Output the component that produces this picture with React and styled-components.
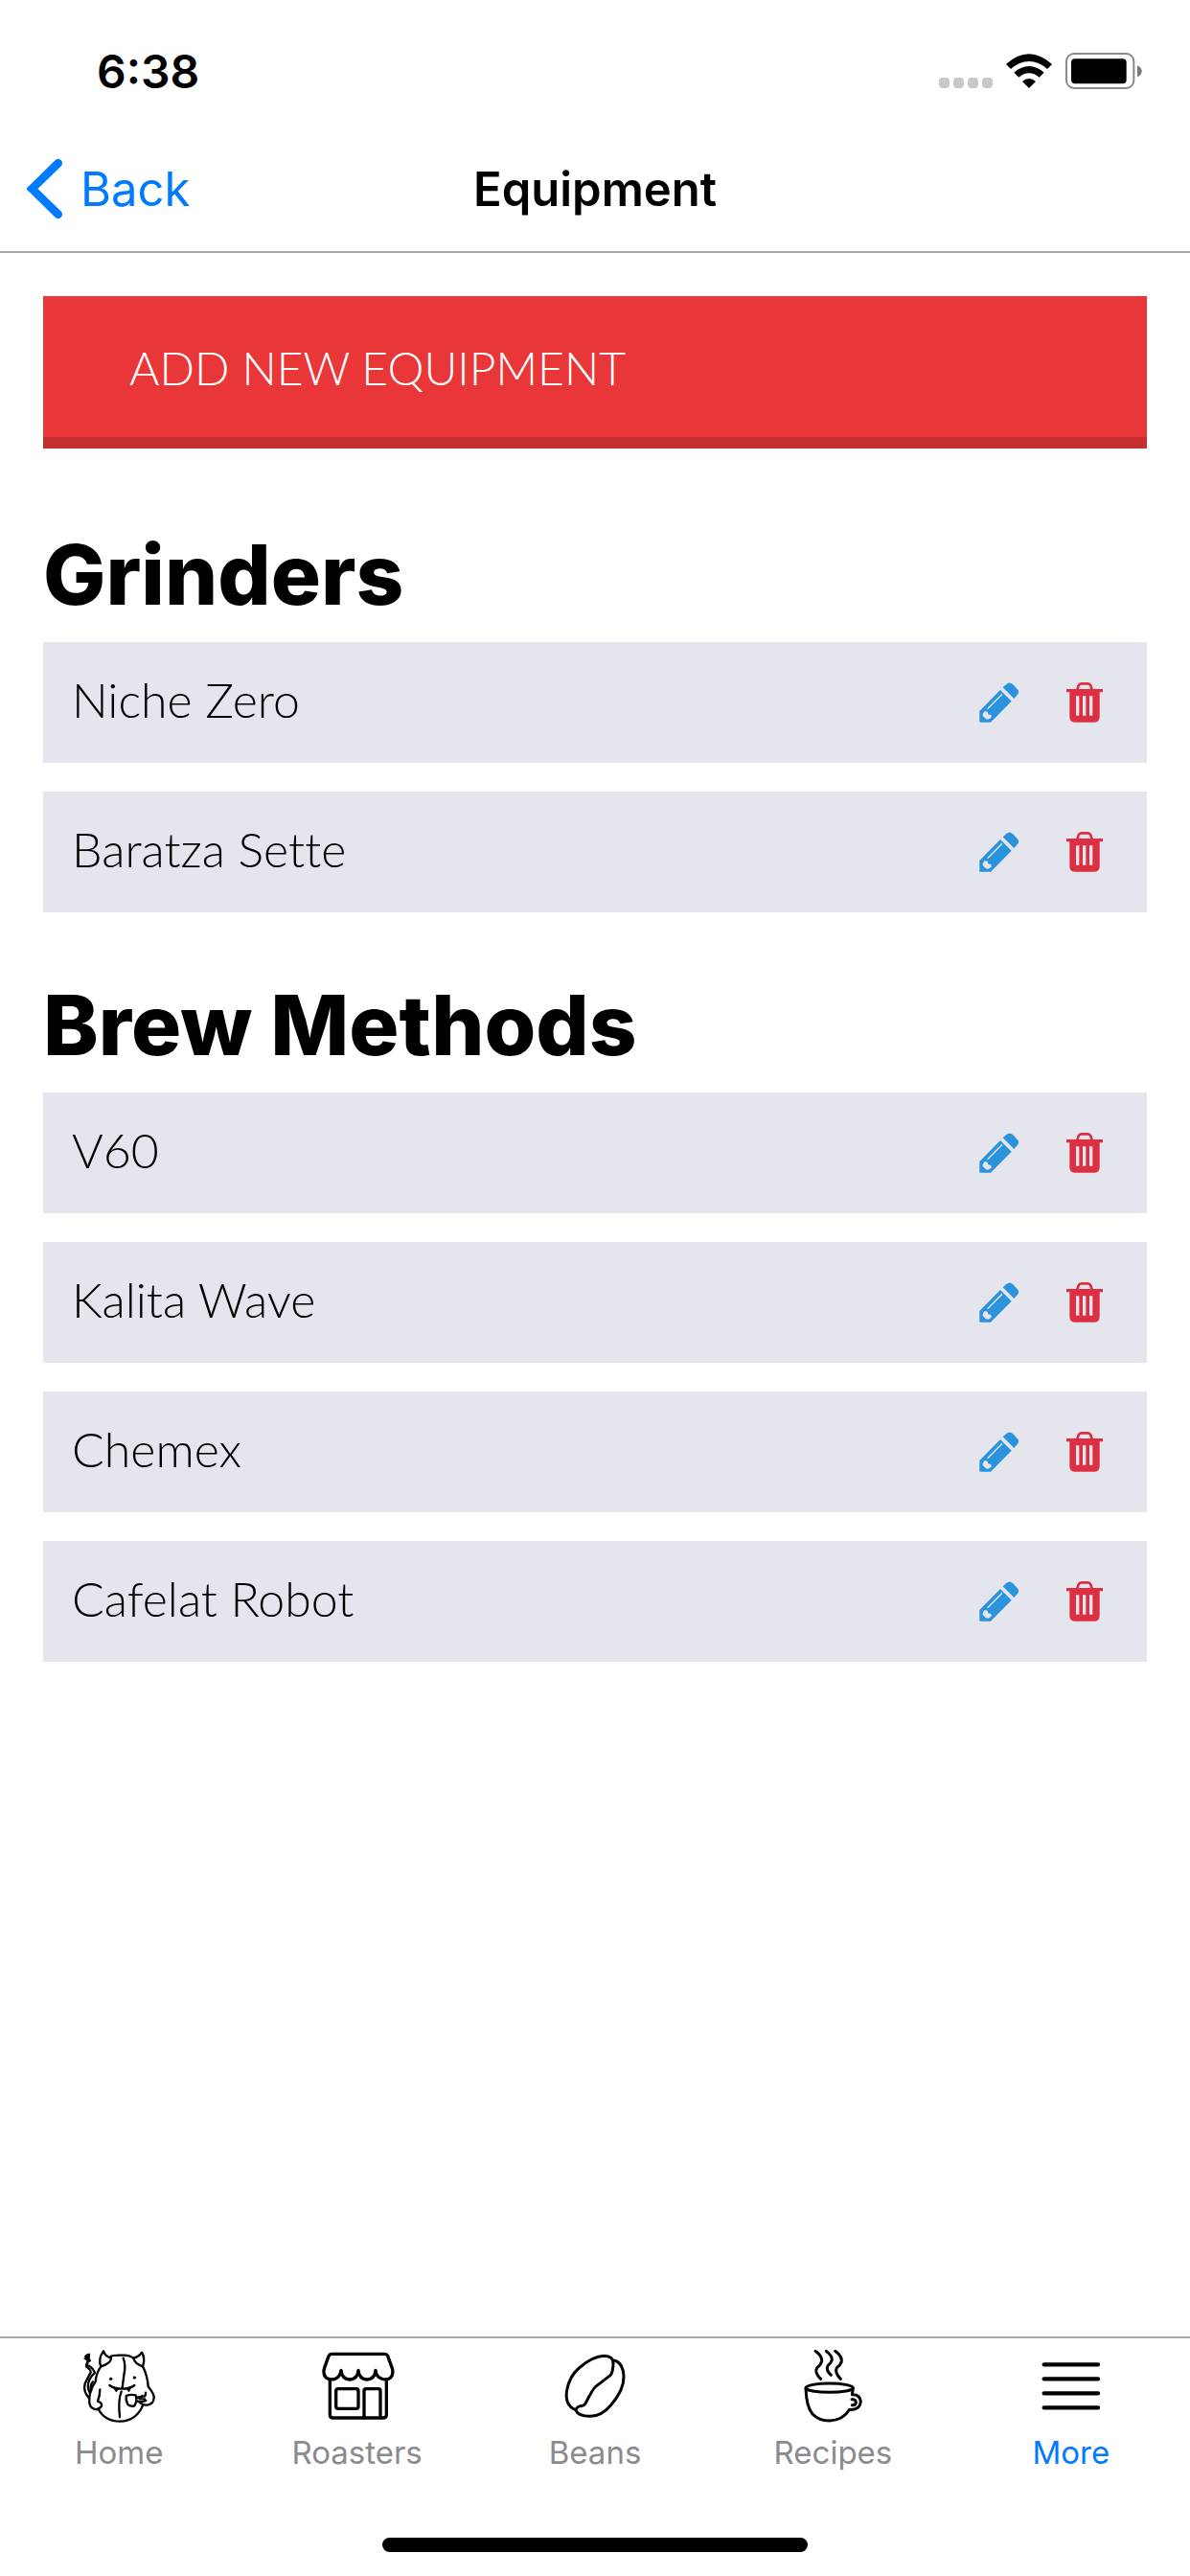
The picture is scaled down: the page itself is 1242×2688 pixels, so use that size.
import { useState } from 'react'
import styled, { createGlobalStyle } from 'styled-components'

const sections = [
  { title: 'Grinders', items: ['Niche Zero', 'Baratza Sette'] },
  { title: 'Brew Methods', items: ['V60', 'Kalita Wave', 'Chemex', 'Cafelat Robot'] },
]

const WifiIcon = () => (
  <svg width='48' height='36' viewBox='388 106 144 108'>
    <path d='M388 139 Q424 107 460 107 Q496 107 532 139 L517 154 Q490 130 460 130 Q430 130 403 154 Z' />
    <path d='M413 165 Q436 145 460 145 Q484 145 507 165 L492 180 Q476 167 460 167 Q444 167 428 180 Z' />
    <path d='M439 193 Q449 184 460 184 Q471 184 481 193 L460 214 Z' />
  </svg>
)

const BatteryIcon = () => (
  <svg width='80' height='38' viewBox='574 104 240 114'>
    <rect x='577' y='107' width='211' height='108' rx='24' fill='#fff' stroke='#8a8a8a' strokeWidth='6' />
    <rect x='592' y='123' width='173' height='78' rx='12' />
    <path d='M799 144 Q813 150 813 162 Q813 174 799 180 Z' fill='#777' />
  </svg>
)

const BackIcon = () => (
  <svg width='38' height='64' viewBox='83 496 114 192' fill='none' stroke='#007aff' strokeWidth='26' strokeLinecap='round'>
    <path d='M181 512 L99 592 L181 672' />
  </svg>
)

const PencilIcon = () => (
  <svg width='42' height='42' viewBox='127 160 126 126'>
    <path d='M128 285 V250 L193 184 L228 219 L163 285 Z' fill='#2b93dc' />
    <path d='M201 176 L212 166 Q222 157 232 166 L246 181 Q255 190 246 200 L236 211 Z' fill='#2b93dc' />
    <path d='M153 243 L199 197' fill='none' stroke='#e5e5ee' strokeWidth='4' />
    <path d='M138 259 L144 250 L153 252 L155 260 L164 262 L165 270 L155 276 L148 275 L138 265 Z' fill='#e5e5ee' />
  </svg>
)

const TrashIcon = () => (
  <svg width='38' height='42' viewBox='399 160 114 126'>
    <path d='M432 186 L437 170 Q440 164 446 164 H466 Q472 164 475 170 L480 186' fill='none' stroke='#dc2f42' strokeWidth='8' />
    <path d='M399 181 H513 V191 H503 V268 Q503 285 487 285 H425 Q409 285 409 268 V191 H399 Z' fill='#dc2f42' />
    <path d='M434 203 V264 M455 203 V264 M476 203 V264' fill='none' stroke='#e5e5ee' strokeWidth='10' />
  </svg>
)

const HomeIcon = () => (
  <TabSvg viewBox='73 90 240 240' strokeWidth='7'>
    <path d='M166 118 Q174 112 202 113 Q225 111 239 122' />
    <path d='M137 148 Q122 168 120 196 Q104 218 101 245 Q98 277 115 281 Q128 286 139 272 Q142 263 127 257 Q134 240 134 220' />
    <path d='M129 282 Q150 320 197 320 Q249 318 269 268' />
    <path d='M268 148 Q283 178 285 211 Q304 235 303 246 Q302 266 282 269 Q266 270 256 258' />
    <path d='M137 148 Q127 124 145 100 Q149 116 169 122 Q168 139 137 148 Z' />
    <path d='M268 148 Q277 124 265 104 Q258 117 239 122 Q243 139 268 148 Z' />
    <path d='M207 122 Q216 145 209 175 Q206 198 204 215 M201 227 Q190 253 196 306' />
    <path d='M164 207 Q178 218 203 218 Q228 218 242 207' />
    <path d='M177 216 L185 228 L192 218 Z M217 218 L225 228 L231 214 Z' fill='#000' strokeWidth='2' />
    <circle cx='168' cy='187' r='4' fill='#000' strokeWidth='2' />
    <circle cx='242' cy='183' r='4' fill='#000' strokeWidth='2' />
    <path d='M216 240 Q230 234 246 238 Q252 255 242 271 Q231 275 221 267 Q214 253 216 240 Z' />
    <path d='M248 246 L267 242 M250 257 Q263 262 278 255 M266 240 Q277 247 277 230 M258 250 H274' />
    <path d='M100 247 Q80 226 87 202 Q98 179 105 167 Q107 160 91 148' />
    <path d='M103 232 Q91 210 101 190 Q109 174 118 168 Q112 153 100 146' />
    <path d='M86 116 Q94 107 102 108 L101 122 L105 131 L97 135 L96 148 L89 144 L94 130 L84 123 L94 121 Z' fill='#000' strokeWidth='3' />
    <path d='M107 221 Q101 209 112 196' />
  </TabSvg>
)

const RoastersIcon = () => (
  <TabSvg viewBox='158 90 240 240' strokeWidth='10'>
    <path d='M198 109 H363 Q370 109 373 115 L386 151 Q393 172 382 183 Q371 193 353 186 Q337 180 335 160 Q333 187 308 189 Q283 187 281 160 Q279 187 254 189 Q229 187 227 160 Q224 182 208 187 Q190 192 179 182 Q169 171 175 152 L188 116 Q191 109 198 109 Z' />
    <path d='M192 188 V299 Q192 309 202 309 H359 Q369 309 369 299 V188' />
    <rect x='211' y='218' width='70' height='62' rx='7' />
    <path d='M299 309 V224 Q299 218 305 218 H344 Q350 218 350 224 V309' />
  </TabSvg>
)

const BeansIcon = () => (
  <TabSvg viewBox='123 90 240 240' strokeWidth='9'>
    <path d='M182 284 Q147 269 155 222 Q163 179 193 153 Q236 116 271 115 Q300 116 300 137 Q300 165 291 176 L245 211 Q236 218 213 264 Q208 272 196 272 Q188 274 182 284 Q191 304 225 304 Q261 306 292 270 Q334 222 333 180 Q331 133 299 128' />
  </TabSvg>
)

const RecipesIcon = () => (
  <TabSvg viewBox='148 90 240 240' strokeWidth='9'>
    <path d='M214 100 Q235 115 234 131 Q232 142 219 152 Q210 167 231 187' />
    <path d='M248 100 Q267 115 266 127 Q264 136 253 146 Q246 160 263 175' />
    <path d='M276 100 Q297 115 296 131 Q294 142 281 152 Q273 167 293 187' />
    <ellipse cx='258' cy='215' rx='74' ry='14' />
    <path d='M184 217 Q186 274 205 297 Q225 318 259 318 Q300 317 321 283 Q354 285 356 258 Q354 235 329 236 L332 217' />
    <path d='M328 251 Q341 250 341 261 Q340 270 329 269' />
  </TabSvg>
)

const MoreIcon = () => (
  <TabSvg viewBox='113 90 240 240' strokeWidth='13'>
    <path d='M148 142 H317 M148 187 H317 M148 232 H317 M148 277 H317' />
  </TabSvg>
)

const tabs = [
  { label: 'Home', Icon: HomeIcon },
  { label: 'Roasters', Icon: RoastersIcon },
  { label: 'Beans', Icon: BeansIcon },
  { label: 'Recipes', Icon: RecipesIcon },
  { label: 'More', Icon: MoreIcon },
]

const App = () => {
  const [equipment, setEquipment] = useState(sections)
  const [active, setActive] = useState('More')
  const handleDelete = (title, item) => {
    setEquipment(equipment.map((section) => (
      section.title === title
        ? { ...section, items: section.items.filter((i) => i !== item) }
        : section
    )))
  }
  return (
    <RootContainer>
      <GlobalStyle />
      <StatusBar>
        <Time>6:38</Time>
        <StatusIcons>
          <Signal><Dot /><Dot /><Dot /><Dot /></Signal>
          <WifiIcon />
          <BatteryIcon />
        </StatusIcons>
      </StatusBar>
      <NavBar>
        <BackLink href='#back'><BackIcon />Back</BackLink>
        <Title>Equipment</Title>
      </NavBar>
      <Content>
        <AddButton type='button'>ADD NEW EQUIPMENT</AddButton>
        {equipment.map(({ title, items }) => (
          <Section key={title}>
            <SectionHeader>{title}</SectionHeader>
            <List>
              {items.map((item) => (
                <Row key={item}>
                  <RowName>{item}</RowName>
                  <IconButton type='button' aria-label={`Edit ${item}`}><PencilIcon /></IconButton>
                  <IconButton type='button' aria-label={`Delete ${item}`} onClick={() => handleDelete(title, item)}>
                    <TrashIcon />
                  </IconButton>
                </Row>
              ))}
            </List>
          </Section>
        ))}
      </Content>
      <TabBar>
        {tabs.map(({ label, Icon }) => (
          <Tab key={label} href={`#${label.toLowerCase()}`} $active={label === active} onClick={() => setActive(label)}>
            <Icon />
            {label}
          </Tab>
        ))}
      </TabBar>
      <HomeIndicator />
    </RootContainer>
  )
}

const GlobalStyle = createGlobalStyle`
  * {
    box-sizing: border-box;
  }
  body {
    margin: 0;
    background: #fff;
  }
  svg {
    display: block;
    flex-shrink: 0;
  }
`

const RootContainer = styled.div`
  min-height: 100vh;
  display: flex;
  flex-direction: column;
  font-family: Inter, sans-serif;
  color: #000;
`

const StatusBar = styled.div`
  height: 132px;
  padding: 16px 50px 0 101px;
  display: flex;
  align-items: center;
  justify-content: space-between;
`

const Time = styled.div`
  font-size: 48px;
  font-weight: 600;
`

const StatusIcons = styled.div`
  display: flex;
  align-items: center;
  gap: 14px;
`

const Signal = styled.div`
  display: flex;
  gap: 4px;
  padding-top: 24px;
`

const Dot = styled.span`
  width: 11px;
  height: 11px;
  border-radius: 4px;
  background: #c8c8c8;
`

const NavBar = styled.header`
  height: 132px;
  padding: 0 28px;
  display: grid;
  grid-template-columns: 1fr auto 1fr;
  align-items: center;
  border-bottom: 2px solid #a7a7aa;
`

const BackLink = styled.a`
  display: flex;
  align-items: center;
  gap: 18px;
  font-size: 49px;
  color: #007aff;
  text-decoration: none;
`

const Title = styled.h1`
  margin: 0;
  font-size: 49px;
  font-weight: 600;
`

const Content = styled.main`
  flex: 1;
  padding: 45px;
`

const AddButton = styled.button`
  width: 100%;
  height: 159px;
  padding: 2px 90px 0;
  border: 0;
  border-bottom: 12px solid #c52d31;
  background: #e83639;
  color: #fff;
  font-family: Lato, sans-serif;
  font-size: 48px;
  font-weight: 300;
  text-align: left;
`

const Section = styled.section`
  padding-top: 78px;

  & + & {
    padding-top: 64px;
  }
`

const SectionHeader = styled.h2`
  margin: 0 0 16px;
  font-size: 87px;
  font-weight: 800;
  line-height: 108px;
`

const List = styled.ul`
  margin: 0;
  padding: 0;
  display: flex;
  flex-direction: column;
  gap: 30px;
  list-style: none;
`

const Row = styled.li`
  height: 126px;
  padding: 0 46px 0 30px;
  display: flex;
  align-items: center;
  gap: 49px;
  background: #e5e5ee;
`

const RowName = styled.span`
  flex: 1;
  padding-bottom: 6px;
  font-family: Lato, sans-serif;
  font-size: 50px;
  font-weight: 300;
  font-variant-ligatures: none;
`

const IconButton = styled.button`
  padding: 0;
  border: 0;
  background: none;
`

const TabBar = styled.nav`
  display: flex;
  border-top: 2px solid #a7a7aa;
`

const Tab = styled.a`
  flex: 1 1 0;
  padding-top: 10px;
  display: flex;
  flex-direction: column;
  align-items: center;
  gap: 9px;
  font-size: 33px;
  line-height: 40px;
  color: ${({ $active }) => ($active ? '#007aff' : '#8a8a8f')};
  text-decoration: none;
`

const TabSvg = styled.svg.attrs((props) => ({
  width: 80,
  height: 80,
  fill: 'none',
  stroke: '#000',
  strokeWidth: props.strokeWidth || 6,
  strokeLinecap: 'round',
  strokeLinejoin: 'round',
}))``

const HomeIndicator = styled.div`
  width: 444px;
  height: 15px;
  margin: 69px auto 25px;
  border-radius: 8px;
  background: #000;
`

export default App
